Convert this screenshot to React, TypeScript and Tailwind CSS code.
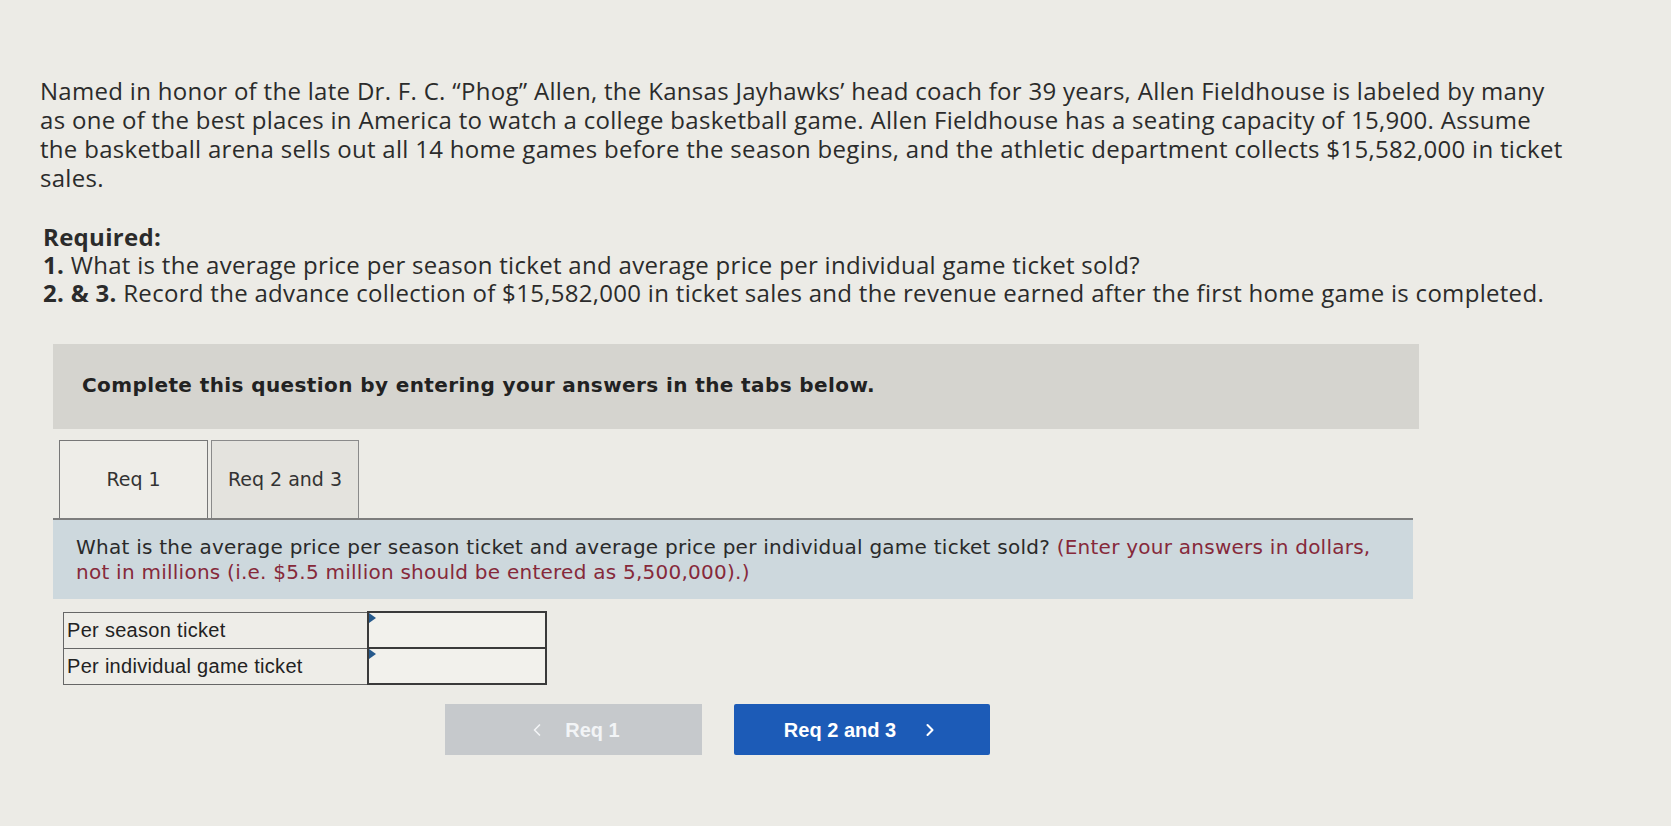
import { ChevronLeft, ChevronRight } from 'lucide-react';

const body = "font-['Open_Sans','Lato',sans-serif]";
const verdana = "font-['DejaVu_Sans','Verdana',sans-serif]";
const arial = "font-['Liberation_Sans','Arial',sans-serif]";

export default function App() {
  return (
    <div className="min-h-screen w-full bg-[#ecebe6] text-[#2b2b2b]">
      <div className="pl-[40px] pt-[76px] pb-[60px]">
        {/* Problem text */}
        <p className={`${body} whitespace-nowrap text-[24px] leading-[29px] tracking-[0.3px]`}>
          Named in honor of the late Dr. F. C. “Phog” Allen, the Kansas Jayhawks’ head coach for 39 years, Allen
          Fieldhouse is labeled by many
          <br />
          as one of the best places in America to watch a college basketball game. Allen Fieldhouse has a seating
          capacity of 15,900. Assume
          <br />
          the basketball arena sells out all 14 home games before the season begins, and the athletic department
          collects $15,582,000 in ticket
          <br />
          sales.
        </p>

        <div className={`${body} mt-[30px] whitespace-nowrap pl-[3px] text-[24px] tracking-[0.3px]`}>
          <p className="font-bold leading-[29px]">Required:</p>
          <p className="leading-[28px]">
            <span className="font-bold">1.</span> What is the average price per season ticket and average price per
            individual game ticket sold?
          </p>
          <p className="leading-[28px]">
            <span className="font-bold">2. &amp; 3.</span> Record the advance collection of $15,582,000 in ticket sales
            and the revenue earned after the first home game is completed.
          </p>
        </div>

        {/* Instruction banner */}
        <div className="mt-[37px] ml-[13px] h-[85px] w-[1366px] bg-[#d5d4cf] pl-[29px] pt-[28px]">
          <p className={`${verdana} text-[20px] font-bold leading-[26px] tracking-[0.4px] text-[#222]`}>
            Complete this question by entering your answers in the tabs below.
          </p>
        </div>

        {/* Tabs */}
        <div className="ml-[13px] mt-[11px] flex w-[1360px] flex-col">
          <div className="flex gap-[3px] pl-[6px]">
            <div
              className={`${verdana} flex h-[78px] w-[149px] items-center justify-center border-x border-t border-[#777] bg-[#eeede8] text-[19px] text-[#333]`}
            >
              Req 1
            </div>
            <div
              className={`${verdana} flex h-[78px] w-[148px] items-center justify-center border border-b-0 border-[#8a8a8a] bg-[#e4e3de] text-[19px] text-[#333]`}
            >
              Req 2 and 3
            </div>
          </div>

          {/* Question panel */}
          <div className="border-t-2 border-[#7d7d7d] bg-[#cdd8dd] pb-[14px] pl-[23px] pr-[20px] pt-[15px]">
            <p className={`${verdana} whitespace-nowrap text-[20px] leading-[25px] tracking-[0.25px] text-[#2a2a2a]`}>
              What is the average price per season ticket and average price per individual game ticket sold?{' '}
              <span className="text-[#86293a]">
                (Enter your answers in dollars,
                <br />
                not in millions (i.e. $5.5 million should be entered as 5,500,000).)
              </span>
            </p>
          </div>
        </div>

        {/* Answer table */}
        <table className={`${arial} ml-[23px] mt-[12px] border-collapse text-[20px] tracking-[0.3px] text-[#222]`}>
          <tbody>
            {['Per season ticket', 'Per individual game ticket'].map((label) => (
              <tr key={label} className="h-[36px]">
                <td className="w-[304px] border border-[#666] bg-[#eeede8] pl-[3px] align-middle">{label}</td>
                <td className="relative w-[178px] border-2 border-[#3a3a3a] bg-[#f2f1ec] p-0">
                  <span className="absolute left-0 top-0 h-0 w-0 border-y-[5px] border-l-[7px] border-y-transparent border-l-[#275a8c]" />
                </td>
              </tr>
            ))}
          </tbody>
        </table>

        {/* Navigation buttons */}
        <div className="ml-[405px] mt-[19px] flex gap-[32px]">
          <button
            className={`${arial} flex h-[51px] w-[257px] items-center justify-center gap-[18px] bg-[#c6c9cc] text-[20px] font-bold text-[#f2f4f6]`}
          >
            <ChevronLeft className="h-[20px] w-[20px]" strokeWidth={2} />
            <span>Req 1</span>
          </button>
          <button
            className={`${arial} flex h-[51px] w-[256px] items-center justify-center gap-[24px] rounded-[2px] bg-[#1c5bb7] text-[20px] font-bold text-white`}
          >
            <span>Req 2 and 3</span>
            <ChevronRight className="h-[20px] w-[20px]" strokeWidth={2.5} />
          </button>
        </div>
      </div>
    </div>
  );
}
